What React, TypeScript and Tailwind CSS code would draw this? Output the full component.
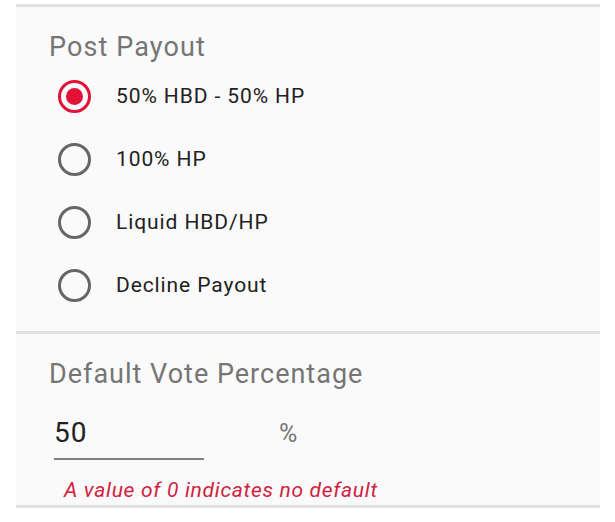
import { useState } from "react";

const options = ["50% HBD - 50% HP", "100% HP", "Liquid HBD/HP", "Decline Payout"];

function Radio({ checked }: { checked: boolean }) {
  return (
    <span
      className={
        "flex h-[33px] w-[33px] shrink-0 items-center justify-center rounded-full border-[3px] " +
        (checked ? "border-[#e31337]" : "border-[#666666]")
      }
    >
      {checked && <span className="h-[17px] w-[17px] rounded-full bg-[#e31337]" />}
    </span>
  );
}

export default function App() {
  const [payout, setPayout] = useState(0);

  return (
    <div className="h-[522px] w-[615px] bg-white font-['Roboto',sans-serif]">
      <div className="ml-4 w-[584px] bg-[#fafafa]">
        <div className="h-1 bg-white" />
        <div className="h-[3px] bg-[#e0e0e0]" />

        <section className="px-[33px] pt-[24px] pb-[14px]">
          <h2 className="text-[27px] leading-[32px] tracking-[1.1px] text-[#757575]">Post Payout</h2>
          <div className="mt-[2px] flex flex-col">
            {options.map((label, i) => (
              <button
                key={label}
                onClick={() => setPayout(i)}
                className="flex h-[63px] items-center gap-[25px] pl-[9px] text-left"
              >
                <Radio checked={payout === i} />
                <span className="text-[21px] tracking-[0.9px] text-[#212121]">{label}</span>
              </button>
            ))}
          </div>
        </section>

        <div className="h-[3px] bg-[#e0e0e0]" />

        <section className="px-[33px] pt-[24px]">
          <h2 className="text-[27px] leading-[32px] tracking-[1px] text-[#757575]">Default Vote Percentage</h2>
          <div className="mt-[28px] flex items-end">
            <div className="ml-[5px] w-[150px] border-b-2 border-[#808080] pb-[9px]">
              <span className="text-[28px] leading-[30px] tracking-[1px] text-[#212121]">50</span>
            </div>
            <span className="ml-[75px] mb-[11px] text-[25px] leading-[30px] text-[#757575]">%</span>
          </div>
          <p className="ml-[15px] mt-[18px] text-[21px] leading-[24px] tracking-[0.7px] italic text-[#d0213f]">
            A value of 0 indicates no default
          </p>
        </section>

        <div className="mt-[3px] h-[3px] bg-[#e0e0e0]" />
      </div>
    </div>
  );
}
